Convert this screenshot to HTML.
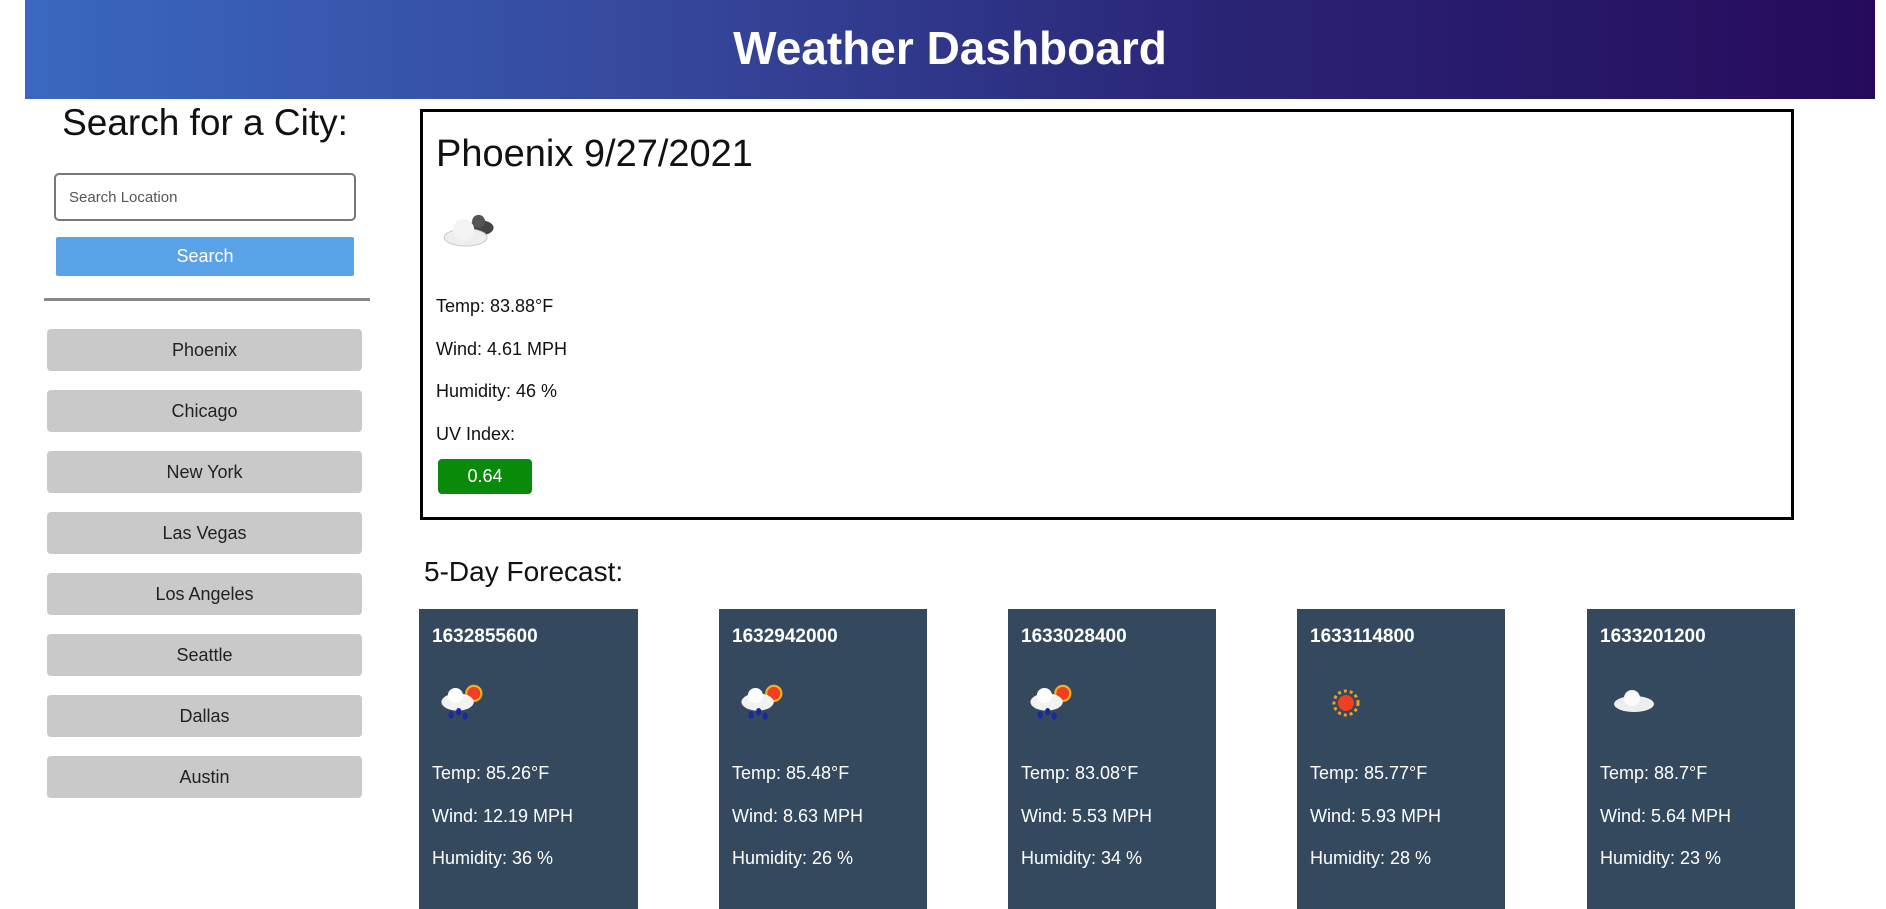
<!DOCTYPE html>
<html><head><meta charset="utf-8"><style>
*{box-sizing:border-box;margin:0;padding:0}
body{width:1886px;height:896px;overflow:hidden;background:#fff;font-family:"Liberation Sans",sans-serif;color:#111;position:relative}
.hdr{position:absolute;left:25px;top:0;width:1850px;height:99px;background:linear-gradient(90deg,#3a68c0 0%,#35479c 35%,#2a2474 65%,#260b5c 100%);color:#fff;font-weight:bold;font-size:46px;text-align:center;line-height:96px}
.abs{position:absolute}
.h2{left:50px;top:102px;font-size:37px;width:310px;text-align:center;white-space:nowrap}
.inp{left:54px;top:173px;width:302px;height:48px;border:2.5px solid #777;border-radius:5px;font-size:15px;color:#555;padding:14px 13px}
.btn{left:56px;top:237px;width:298px;height:39px;background:#5ba3e8;color:#fff;font-size:18px;text-align:center;line-height:39px;border-radius:2px}
.hr{left:44px;top:298px;width:326px;height:3px;background:#888}
.city{left:47px;width:315px;height:42px;background:#c9c9c9;border-radius:4px;font-size:18px;text-align:center;line-height:42px;color:#222}
.main{left:420px;top:109px;width:1374px;height:411px;border:3px solid #000}
.title{left:436px;top:133px;font-size:38px}
.t{left:436px;font-size:18px}
.uv{left:438px;top:459px;width:94px;height:35px;background:#0a8a0a;color:#fff;border-radius:4px;text-align:center;line-height:35px;font-size:18px}
.fh{left:424px;top:556px;font-size:28px}
.card{top:609px;width:208px;height:300px;background:#34495e}
</style></head><body>
<div class="hdr">Weather Dashboard</div>
<div class="abs h2">Search for a City:</div>
<div class="abs inp">Search Location</div>
<div class="abs btn">Search</div>
<div class="abs hr"></div>
<div class="abs city" style="top:329px">Phoenix</div>
<div class="abs city" style="top:390px">Chicago</div>
<div class="abs city" style="top:451px">New York</div>
<div class="abs city" style="top:512px">Las Vegas</div>
<div class="abs city" style="top:573px">Los Angeles</div>
<div class="abs city" style="top:634px">Seattle</div>
<div class="abs city" style="top:695px">Dallas</div>
<div class="abs city" style="top:756px">Austin</div>

<div class="abs main"></div>
<div class="abs title">Phoenix 9/27/2021</div>
<svg class="abs" style="left:440px;top:210px" width="60" height="42" viewBox="0 0 56 38"><ellipse cx="38" cy="16" rx="12" ry="7" fill="#444"/><circle cx="36" cy="10" r="6" fill="#555"/><ellipse cx="24" cy="25" rx="20" ry="8" fill="#eee" stroke="#ccc"/><circle cx="22" cy="18" r="10" fill="#f4f4f4"/></svg>
<div class="abs t" style="top:296px">Temp: 83.88°F</div>
<div class="abs t" style="top:339px">Wind: 4.61 MPH</div>
<div class="abs t" style="top:381px">Humidity: 46 %</div>
<div class="abs t" style="top:424px">UV Index:</div>
<div class="abs uv">0.64</div>

<div class="abs fh">5-Day Forecast:</div>

<div class="abs card" style="left:419px;width:219px"></div>
<div class="abs card" style="left:719px"></div>
<div class="abs card" style="left:1008px"></div>
<div class="abs card" style="left:1297px"></div>
<div class="abs card" style="left:1587px"></div>

<div style="color:#fff">
<div class="abs" style="left:432px;top:626px;font-weight:bold;font-size:19px">1632855600</div>
<div class="abs" style="left:732px;top:626px;font-weight:bold;font-size:19px">1632942000</div>
<div class="abs" style="left:1021px;top:626px;font-weight:bold;font-size:19px">1633028400</div>
<div class="abs" style="left:1310px;top:626px;font-weight:bold;font-size:19px">1633114800</div>
<div class="abs" style="left:1600px;top:626px;font-weight:bold;font-size:19px">1633201200</div>

<svg class="abs" style="left:436px;top:680px" width="54" height="44" viewBox="0 0 50 40"><circle cx="35" cy="12" r="7" fill="#f04020" stroke="#f5b020" stroke-width="2"/><ellipse cx="20" cy="20" rx="15" ry="8" fill="#f2f2f2"/><circle cx="18" cy="14" r="7" fill="#fff"/><ellipse cx="14" cy="32" rx="2.5" ry="3.5" fill="#1a2a9a"/><ellipse cx="21" cy="29" rx="2.5" ry="3.5" fill="#1a2a9a"/><ellipse cx="27" cy="33" rx="2.5" ry="3.5" fill="#1a2a9a"/></svg>
<svg class="abs" style="left:736px;top:680px" width="54" height="44" viewBox="0 0 50 40"><circle cx="35" cy="12" r="7" fill="#f04020" stroke="#f5b020" stroke-width="2"/><ellipse cx="20" cy="20" rx="15" ry="8" fill="#f2f2f2"/><circle cx="18" cy="14" r="7" fill="#fff"/><ellipse cx="14" cy="32" rx="2.5" ry="3.5" fill="#1a2a9a"/><ellipse cx="21" cy="29" rx="2.5" ry="3.5" fill="#1a2a9a"/><ellipse cx="27" cy="33" rx="2.5" ry="3.5" fill="#1a2a9a"/></svg>
<svg class="abs" style="left:1025px;top:680px" width="54" height="44" viewBox="0 0 50 40"><circle cx="35" cy="12" r="7" fill="#f04020" stroke="#f5b020" stroke-width="2"/><ellipse cx="20" cy="20" rx="15" ry="8" fill="#f2f2f2"/><circle cx="18" cy="14" r="7" fill="#fff"/><ellipse cx="14" cy="32" rx="2.5" ry="3.5" fill="#1a2a9a"/><ellipse cx="21" cy="29" rx="2.5" ry="3.5" fill="#1a2a9a"/><ellipse cx="27" cy="33" rx="2.5" ry="3.5" fill="#1a2a9a"/></svg>
<svg class="abs" style="left:1331px;top:688px" width="30" height="30" viewBox="0 0 30 30"><circle cx="15" cy="15" r="12" fill="none" stroke="#f5a020" stroke-width="3" stroke-dasharray="3 3"/><circle cx="15" cy="15" r="8" fill="#f04020"/></svg>
<svg class="abs" style="left:1610px;top:686px" width="50" height="28" viewBox="0 0 50 28"><ellipse cx="24" cy="18" rx="20" ry="8" fill="#eee"/><circle cx="22" cy="12" r="8" fill="#fafafa"/></svg>

<div class="abs" style="left:432px;top:763px;font-size:18px">Temp: 85.26°F</div>
<div class="abs" style="left:432px;top:806px;font-size:18px">Wind: 12.19 MPH</div>
<div class="abs" style="left:432px;top:848px;font-size:18px">Humidity: 36 %</div>
<div class="abs" style="left:732px;top:763px;font-size:18px">Temp: 85.48°F</div>
<div class="abs" style="left:732px;top:806px;font-size:18px">Wind: 8.63 MPH</div>
<div class="abs" style="left:732px;top:848px;font-size:18px">Humidity: 26 %</div>
<div class="abs" style="left:1021px;top:763px;font-size:18px">Temp: 83.08°F</div>
<div class="abs" style="left:1021px;top:806px;font-size:18px">Wind: 5.53 MPH</div>
<div class="abs" style="left:1021px;top:848px;font-size:18px">Humidity: 34 %</div>
<div class="abs" style="left:1310px;top:763px;font-size:18px">Temp: 85.77°F</div>
<div class="abs" style="left:1310px;top:806px;font-size:18px">Wind: 5.93 MPH</div>
<div class="abs" style="left:1310px;top:848px;font-size:18px">Humidity: 28 %</div>
<div class="abs" style="left:1600px;top:763px;font-size:18px">Temp: 88.7°F</div>
<div class="abs" style="left:1600px;top:806px;font-size:18px">Wind: 5.64 MPH</div>
<div class="abs" style="left:1600px;top:848px;font-size:18px">Humidity: 23 %</div>
</div>
</body></html>
